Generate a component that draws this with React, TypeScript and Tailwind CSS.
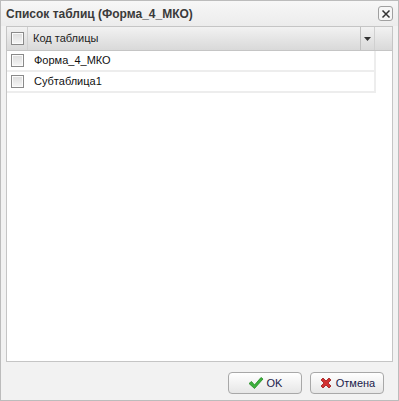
const rows = ["Форма_4_МКО", "Субтаблица1"];

const Check = () => (
  <span className="block w-[13px] h-[13px] border border-[#8a8a8a] bg-gradient-to-b from-[#dcdcdc] to-[#f6f6f6] shadow-[inset_0_0_0_1px_#fbfbfb]" />
);

const App = () => {
  return (
    <div
      className="w-[399px] h-[401px] bg-[#f2f2f2] border border-[#bcbcbc] flex flex-col text-[#000]"
      style={{ fontFamily: '"Liberation Sans", Arial, sans-serif' }}
    >
      {/* title bar */}
      <div className="h-[25px] flex items-center justify-between pl-[5px] pr-[5px] bg-gradient-to-b from-[#f7f7f7] to-[#ececec]">
        <span className="text-[12px] font-bold text-[#3a3a3a]">Список таблиц (Форма_4_МКО)</span>
        <button className="w-[15px] h-[15px] rounded-[3px] border border-[#a0a0a0] bg-[#f6f6f6] flex items-center justify-center">
          <svg width="10" height="10" viewBox="0 0 10 10">
            <path d="M1.5 1.5L8.5 8.5M8.5 1.5L1.5 8.5" stroke="#333" strokeWidth="1.5" />
          </svg>
        </button>
      </div>

      {/* grid */}
      <div className="mx-[5px] h-[336px] bg-white border border-[#c5c5c5] flex flex-col">
        <div className="h-[24px] flex bg-gradient-to-b from-[#f2f2f2] to-[#d9d9d9] border-b border-[#c5c5c5]">
          <div className="w-[21px] flex items-center justify-center border-r border-[#d0d0d0]">
            <Check />
          </div>
          <div className="w-[347px] flex items-center border-r border-[#d0d0d0] relative">
            <span className="pl-[5px] text-[11px] text-[#222]">Код таблицы</span>
            <div className="absolute right-0 top-0 h-full w-[14px] border-l border-[#c0c0c0] flex items-center justify-center">
              <svg width="7" height="4" viewBox="0 0 7 4">
                <path d="M0 0H7L3.5 4Z" fill="#333" />
              </svg>
            </div>
          </div>
          <div className="flex-1" />
        </div>
        {rows.map((r) => (
          <div key={r} className="w-[369px] h-[21px] flex border-b-2 border-r-2 border-[#ededed]">
            <div className="w-[21px] flex items-center justify-center">
              <Check />
            </div>
            <div className="flex items-center pl-[6px] text-[11px] text-[#111]">{r}</div>
          </div>
        ))}
      </div>

      {/* footer */}
      <div className="flex-1 flex items-center justify-end gap-[8px] pr-[14px] pt-[4px]">
        <button className="w-[74px] h-[22px] rounded-[4px] border border-[#a8a8a8] bg-gradient-to-b from-[#ffffff] to-[#e6e6e6] flex items-center justify-center gap-[3px] text-[11px] text-[#1a1a4a]">
          <svg width="16" height="14" viewBox="0 0 16 14">
            <path d="M1 7.5L3.5 5.5L6.5 9L13 1.5L15 3L6.5 12.5Z" fill="#3cb03c" stroke="#238a23" strokeWidth="0.8" strokeLinejoin="round" />
          </svg>
          OK
        </button>
        <button className="w-[74px] h-[22px] rounded-[4px] border border-[#a8a8a8] bg-gradient-to-b from-[#ffffff] to-[#e6e6e6] flex items-center justify-center gap-[3px] text-[11px] text-[#1a1a4a]">
          <svg width="14" height="14" viewBox="0 0 14 14">
            <path d="M2 4L4 2L7 5L10 2L12 4L9 7L12 10L10 12L7 9L4 12L2 10L5 7Z" fill="#d23030" stroke="#9c1a1a" strokeWidth="0.8" strokeLinejoin="round" />
          </svg>
          Отмена
        </button>
      </div>
    </div>
  );
};

export default App;
